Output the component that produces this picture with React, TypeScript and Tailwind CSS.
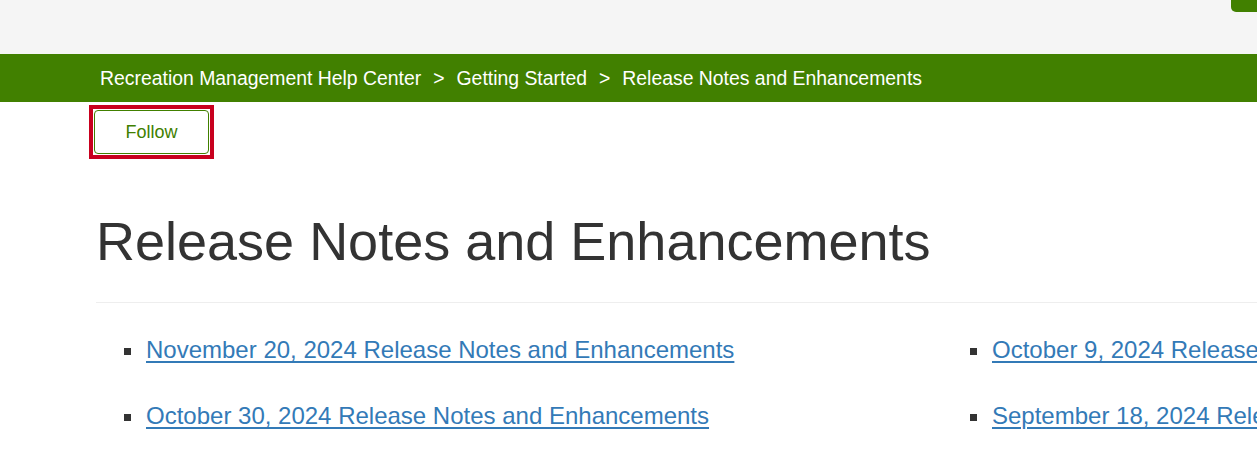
const crumbs = ['Recreation Management Help Center', 'Getting Started', 'Release Notes and Enhancements'];

const articles = [
  'November 20, 2024 Release Notes and Enhancements',
  'October 9, 2024 Release Notes and Enhancements',
  'October 30, 2024 Release Notes and Enhancements',
  'September 18, 2024 Release Notes and Enhancements',
];

export default function App() {
  return (
    <div className="w-full min-h-[468px] overflow-hidden bg-white font-['Liberation_Sans',Arial,sans-serif]">
      <header className="h-[54px] bg-[#f5f5f5] flex justify-end items-start">
        <div className="w-[26px] h-[12px] bg-[#418000] rounded-bl-[5px]" />
      </header>

      <nav className="h-[48px] bg-[#418000] flex items-center pl-[100px] pt-[2px] gap-[12px] text-[19.4px] text-white whitespace-nowrap">
        {crumbs.map((c, i) => (
          <span key={c} className="flex items-center gap-[12px]">
            {i > 0 && <span>&gt;</span>}
            <a href="#">{c}</a>
          </span>
        ))}
      </nav>

      <main className="pl-[96px]">
        <div className="mt-[3px] ml-[-7px] w-[125px] h-[54px] border-[4px] border-[#c8001e] p-[1px]">
          <button className="w-full h-full border border-[#418000] rounded-[4px] text-[18px] text-[#418000] bg-white">
            Follow
          </button>
        </div>

        <h1 className="mt-[53px] text-[54px] leading-[1.1] text-[#333333] whitespace-nowrap">
          Release Notes and Enhancements
        </h1>

        <div className="mt-[31px] border-t border-[#eeeeee] w-[2000px]" />

        <ul className="mt-[29px] grid grid-cols-[846px_846px] gap-y-[30px]">
          {articles.map((a) => (
            <li key={a} className="flex items-center pl-[28px] h-[36px] whitespace-nowrap">
              <span className="w-[7px] h-[7px] bg-[#333333] mr-[15px] mt-[2px]" />
              <a href="#" className="text-[24px] leading-[36px] text-[#337ab7] underline underline-offset-[3px]">
                {a}
              </a>
            </li>
          ))}
        </ul>
      </main>
    </div>
  );
}
